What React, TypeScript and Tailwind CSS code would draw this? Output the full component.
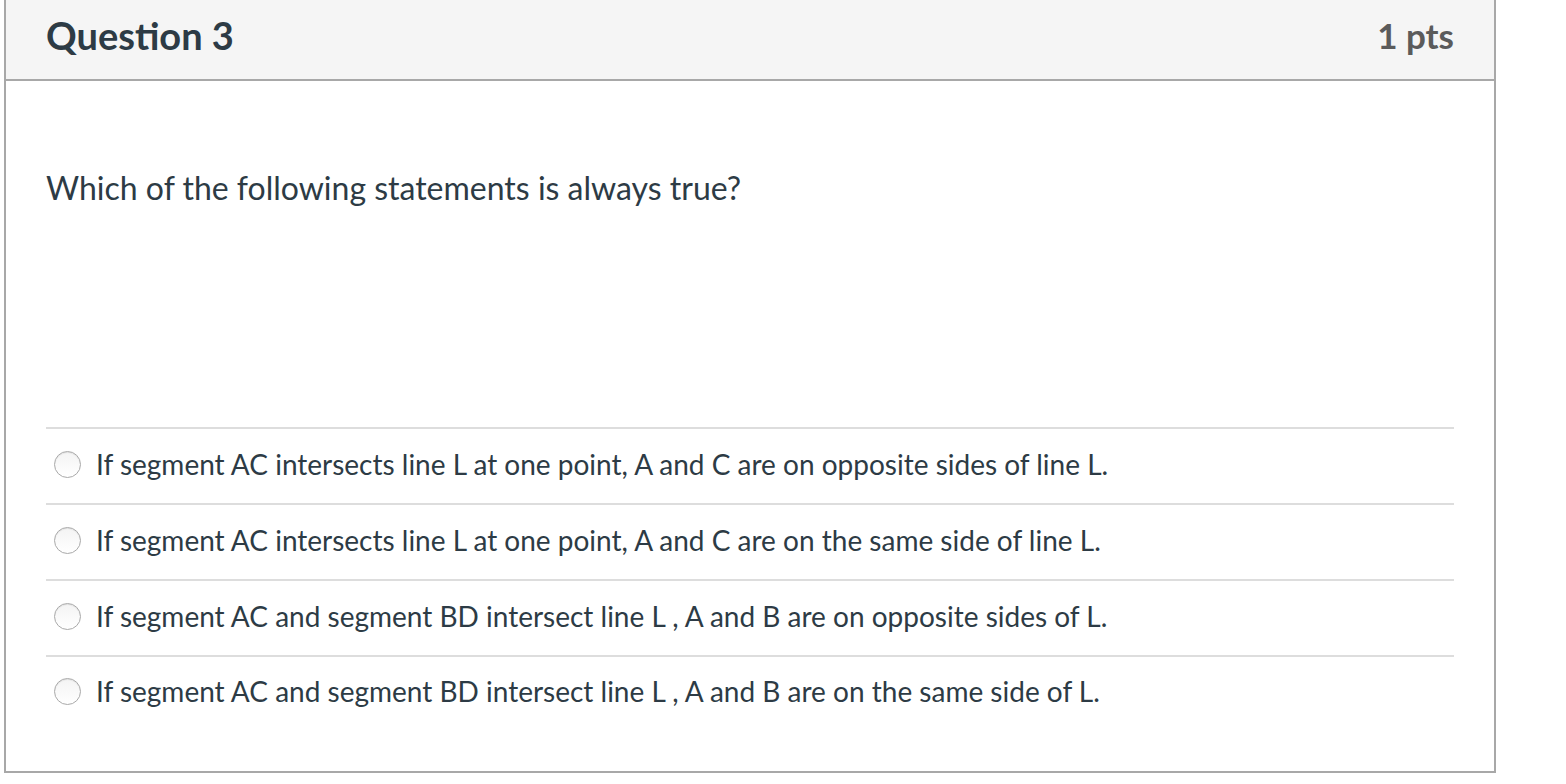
import React from 'react';

const answers = [
  'If segment AC intersects line L at one point, A and C are on opposite sides of line L.',
  'If segment AC intersects line L at one point, A and C are on the same side of line L.',
  'If segment AC and segment BD intersect line L , A and B are on opposite sides of L.',
  'If segment AC and segment BD intersect line L , A and B are on the same side of L.',
];

const Radio: React.FC = () => (
  <span className="block h-[27px] w-[27px] shrink-0 rounded-full border border-[#a9a9a9] bg-gradient-to-b from-[#f4f4f4] to-white shadow-[inset_0_1px_1px_rgba(0,0,0,0.08)]" />
);

export default function App() {
  return (
    <div className="min-h-screen bg-white pl-1" style={{ fontFamily: 'Lato, "Open Sans", sans-serif' }}>
      <div className="w-[1492px] border-x-2 border-b-2 border-[#a8a8a8] text-[#2d3b45]">
        {/* Header */}
        <div className="flex h-[81px] items-center justify-between border-b-2 border-[#a8a8a8] bg-[#f5f5f5] px-10 pb-2">
          <h2 className="text-[38px] font-bold">Question 3</h2>
          <span className="text-[35px] font-bold text-[#5b5b5b]">1 pts</span>
        </div>

        {/* Body */}
        <div className="px-10 pb-10">
          <p className="pt-[83px] text-[32px] leading-[48px]">Which of the following statements is always true?</p>

          <div className="mt-[215px]">
            {answers.map((a, i) => (
              <div
                key={i}
                className={`flex h-[76px] items-center gap-[15px] pb-1 pl-2 ${i < 3 ? 'border-t-2' : 'border-y-2 border-b-transparent'} border-t-[#dddddd]`}
              >
                <Radio />
                <span className="text-[28px]">{a}</span>
              </div>
            ))}
          </div>
        </div>
      </div>
    </div>
  );
}
